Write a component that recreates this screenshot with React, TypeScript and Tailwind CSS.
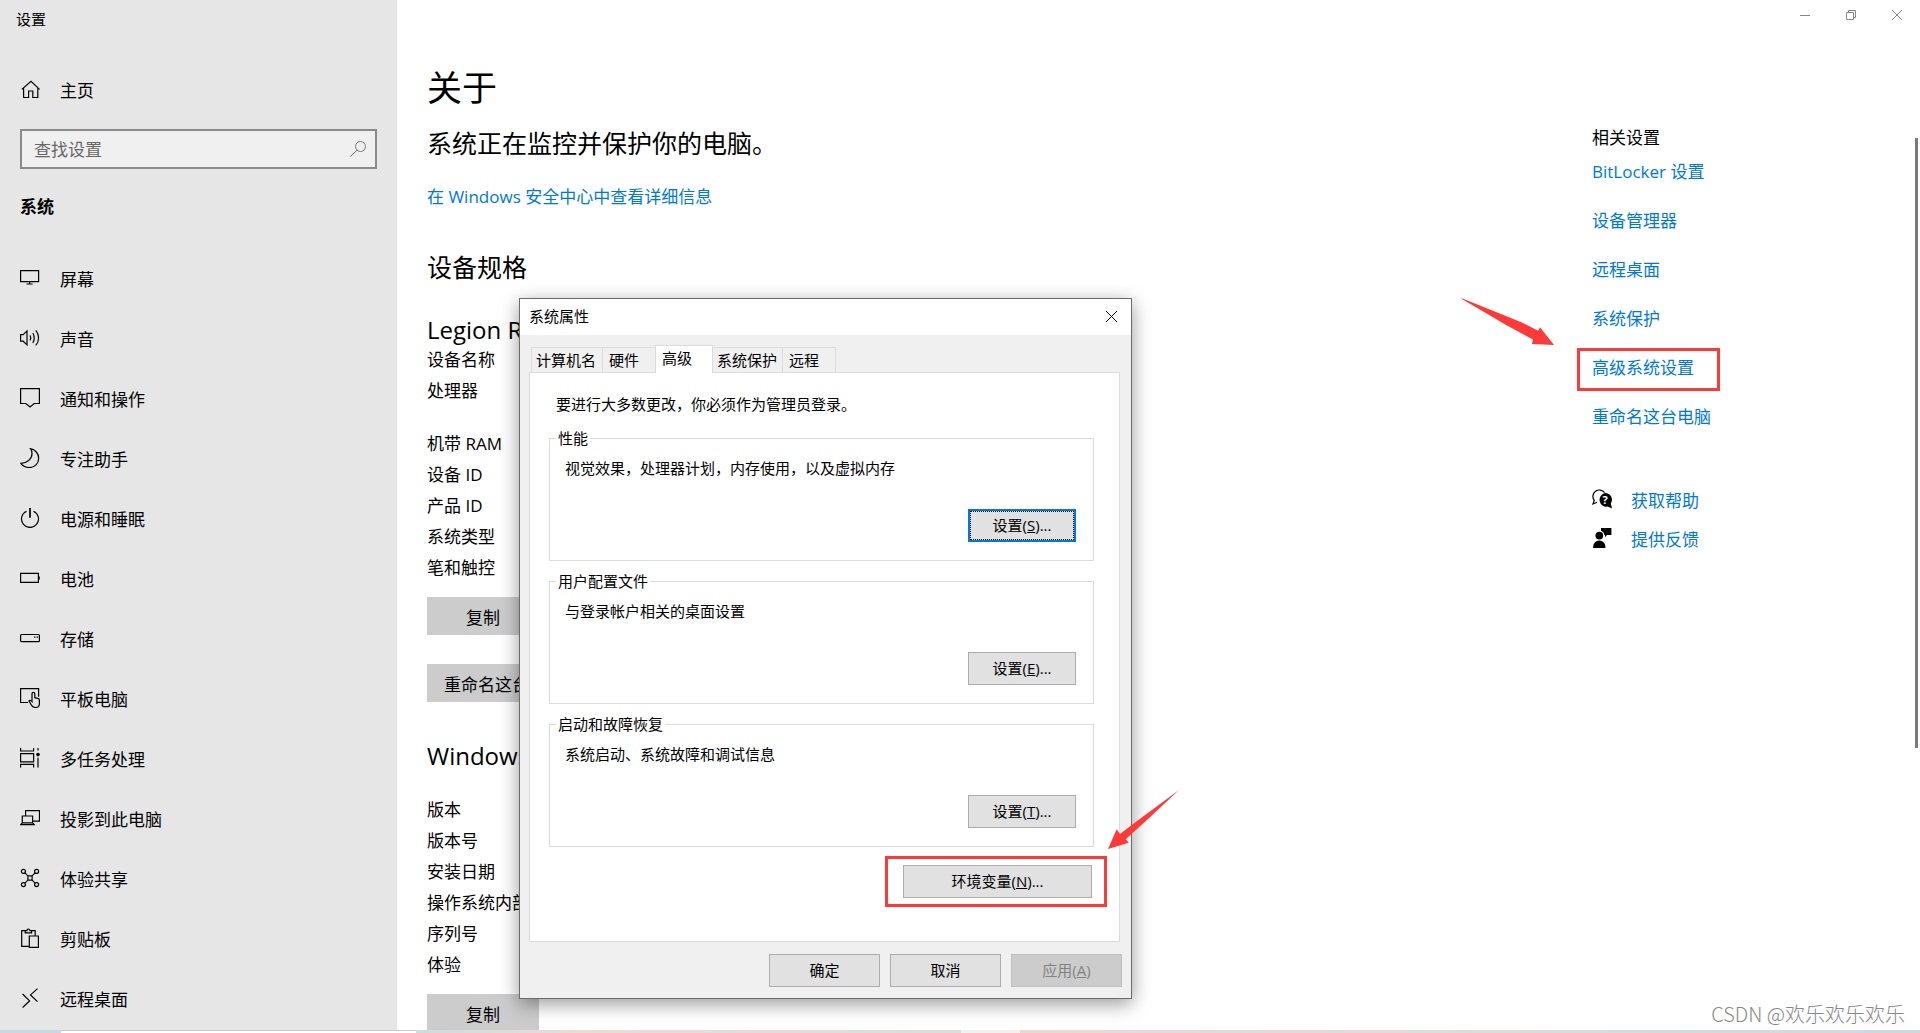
import { useState, type ReactNode } from "react";

const navItems = [
  { label: "屏幕", icon: "display" },
  { label: "声音", icon: "sound" },
  { label: "通知和操作", icon: "notification" },
  { label: "专注助手", icon: "moon" },
  { label: "电源和睡眠", icon: "power" },
  { label: "电池", icon: "battery" },
  { label: "存储", icon: "storage" },
  { label: "平板电脑", icon: "tablet" },
  { label: "多任务处理", icon: "multitask" },
  { label: "投影到此电脑", icon: "project" },
  { label: "体验共享", icon: "share" },
  { label: "剪贴板", icon: "clipboard" },
  { label: "远程桌面", icon: "remote" },
];

const relatedLinks = [
  "BitLocker 设置",
  "设备管理器",
  "远程桌面",
  "系统保护",
  "高级系统设置",
  "重命名这台电脑",
];

const tabs = [
  { label: "计算机名", className: "w-[72px] pl-1" },
  { label: "硬件", className: "w-[54px] pl-1.5" },
  { label: "高级", className: "w-[58px] pl-1.5" },
  { label: "系统保护", className: "w-[71px] pl-1" },
  { label: "远程", className: "w-[54px] pl-1.5" },
];

const groups = [
  {
    title: "性能",
    text: "视觉效果，处理器计划，内存使用，以及虚拟内存",
    hotkey: "S",
    focused: true,
  },
  { title: "用户配置文件", text: "与登录帐户相关的桌面设置", hotkey: "E" },
  { title: "启动和故障恢复", text: "系统启动、系统故障和调试信息", hotkey: "T" },
];

const icons: Record<string, ReactNode> = {
  home: <path d="M1.8 9.4 11 1.3l8.6 8.1M3.6 8v9.5h5V11h4.2v6.5h5V8" />,
  display: <path d="M.6 2.6h18v11H.6zM9.6 13.6V16M6.5 16h6.2" />,
  sound: (
    <path d="M.6 6.6h2.6L7 2.9v14l-3.8-3.7H.6zM10 7.4c.9 1.4.9 3.6 0 5M12.8 5c1.9 2.7 1.9 7.1 0 9.8M15.8 2.4c3.7 4.4 3.7 10.6 0 15" />
  ),
  notification: <path d="M.6.6h18.8v14.9h-5.2L10 19l-4.2-3.5H.6z" />,
  moon: (
    <path d="M10.5.7c4.7.8 8.2 4.8 8.2 9.6a9.2 9.2 0 0 1-9.2 9.2c-3.8 0-6.7-1.6-8.6-4.2 6.3 0 11.1-4.5 11.1-9.6 0-2-.4-3.6-1.5-5z" />
  ),
  power: (
    <>
      <path d="M6.5 3.2a8.5 8.5 0 1 0 7 0" />
      <path d="M10 0v9.8" strokeWidth="1.7" />
    </>
  ),
  battery: <path d="M.6 5.3h17.8v9H.6zM19.2 8.5v3" />,
  storage: (
    <>
      <rect x=".6" y="6.5" width="18.8" height="7.2" rx="1" />
      <path d="M14 9.2h1.4M16.6 9.2H18" />
    </>
  ),
  tablet: (
    <path d="M8 14.5H.6V.6h18v8.2M12 13.6V5.8a1.4 1.4 0 0 1 2.8 0v3.9l3 .6c1 .2 1.6.9 1.6 1.9v3.2c0 2.4-1.6 4.1-4 4.1-2.2 0-3.4-1-4.2-2.8L9 13c.8-.9 1.8-.7 3 .6z" />
  ),
  multitask: (
    <>
      <path d="M.6 0v3h13V0M.6 5.6h13v8.2H.6zM.6 19.5v-3.2h13v3.2M18 0v2.5M18 9.8v9.7" />
      <circle cx="18" cy="6.6" r="1.8" fill="currentColor" stroke="none" />
    </>
  ),
  project: (
    <path d="M5.6 7.6v-5h13.9v10.6h-6.3M2.3 8h10.3v6.8H2.3zM2.3 14.8.6 16.7h13.6l-1.6-1.9" />
  ),
  share: (
    <>
      <circle cx="3.4" cy="3.4" r="2" />
      <circle cx="16.6" cy="3.4" r="2" />
      <circle cx="3.4" cy="16.6" r="2" />
      <circle cx="16.6" cy="16.6" r="2" />
      <path d="m4.9 4.9 3 3M15.1 4.9l-3 3M4.9 15.1l3-3M15.1 15.1l-3-3M7.9 7.9h4.2v4.2H7.9z" />
    </>
  ),
  clipboard: (
    <path d="M8.6 18.4H1.7V2.6h3.5M11.6 2.6h3.6v5M5.2 4.8V2.6h1.7a1.5 1.5 0 0 1 3 0h1.7v2.2zM9.3 8h9.1v11.4H9.3z" />
  ),
  remote: <path d="m2.6 6 7 6.9-7 6.6M17.5.6l-7 6.3 7 6.7" />,
};

const Icon = ({ name }: { name: string }) => (
  <svg
    viewBox="0 0 20 20"
    className="size-5 shrink-0"
    fill="none"
    stroke="currentColor"
    strokeWidth="1.2"
    aria-hidden="true"
  >
    {icons[name]}
  </svg>
);

const Sidebar = () => (
  <aside className="w-[397px] shrink-0 overflow-hidden bg-[#e6e6e6] px-5">
    <p className="-ml-1 pt-[7px] text-[15px] leading-6">设置</p>
    <a href="#home" className="mt-[47px] flex h-6 items-center gap-5">
      <Icon name="home" />
      <span className="pt-0.5 leading-6">主页</span>
    </a>
    <div className="mt-[27px] flex h-10 items-center border-2 border-[#8a8a8a] bg-[#f0f0f0] pr-2 pl-3">
      <input
        type="text"
        aria-label="查找设置"
        placeholder="查找设置"
        className="h-full min-w-0 flex-1 bg-transparent outline-none placeholder:text-[#666]"
      />
      <svg
        viewBox="0 0 18 18"
        className="size-[18px]"
        fill="none"
        stroke="#777"
        aria-hidden="true"
      >
        <circle cx="11.5" cy="6.5" r="5" />
        <path d="m8 10.2-6.7 6.3" />
      </svg>
    </div>
    <h2 className="mt-[26px] leading-6 font-bold">系统</h2>
    <nav className="mt-[29px]">
      {navItems.map(({ label, icon }) => (
        <a
          key={label}
          href={`#${icon}`}
          className="flex h-[60px] items-center gap-5"
        >
          <Icon name={icon} />
          <span className="pt-1 leading-6">{label}</span>
        </a>
      ))}
    </nav>
  </aside>
);

const WindowControls = () => (
  <div className="flex justify-end text-[#888]">
    <button
      type="button"
      aria-label="最小化"
      className="grid h-[30px] w-[46px] place-items-center"
    >
      <svg viewBox="0 0 10 10" className="size-2.5" fill="none" stroke="currentColor">
        <path d="M0 5.5h10" />
      </svg>
    </button>
    <button
      type="button"
      aria-label="还原"
      className="grid h-[30px] w-[46px] place-items-center"
    >
      <svg viewBox="0 0 10 10" className="size-2.5" fill="none" stroke="currentColor">
        <path d="M.5 2.5h7v7h-7zM2.5 2.5v-2h7v7h-2" />
      </svg>
    </button>
    <button
      type="button"
      aria-label="关闭"
      className="grid h-[30px] w-[46px] place-items-center"
    >
      <svg viewBox="0 0 10 10" className="size-2.5" fill="none" stroke="currentColor">
        <path d="m0 0 10 10M10 0 0 10" />
      </svg>
    </button>
  </div>
);

const About = () => (
  <section className="pt-[35px]">
    <h1 className="text-[35px] leading-[46px]">关于</h1>
    <p className="mt-4 text-[25px] leading-8">系统正在监控并保护你的电脑。</p>
    <a href="#security" className="mt-[26px] block leading-6 text-[#0078d7]">
      在 Windows 安全中心中查看详细信息
    </a>

    <h2 className="mt-[42px] text-[25px] leading-8">设备规格</h2>
    <h3 className="mt-[33px] text-[24px] leading-7">Legion R</h3>
    <ul className="leading-[31px]">
      <li>设备名称</li>
      <li className="mb-[22px]">处理器</li>
      <li>机带 RAM</li>
      <li>设备 ID</li>
      <li>产品 ID</li>
      <li>系统类型</li>
      <li>笔和触控</li>
    </ul>
    <button type="button" className="mt-3.5 block h-[38px] w-28 bg-[#ccc] pt-[3px]">
      复制
    </button>
    <button
      type="button"
      className="mt-[29px] block h-[38px] bg-[#ccc] px-[17px] pt-[3px]"
    >
      重命名这台电脑
    </button>

    <h2 className="mt-10 text-[24px] leading-7">Windows 规格</h2>
    <ul className="mt-6 leading-[31px]">
      <li>版本</li>
      <li>版本号</li>
      <li>安装日期</li>
      <li>操作系统内部版本</li>
      <li>序列号</li>
      <li>体验</li>
    </ul>
    <button type="button" className="mt-3.5 block h-[38px] w-28 bg-[#ccc] pt-[3px]">
      复制
    </button>
  </section>
);

const Related = () => (
  <aside className="w-[328px] shrink-0 pt-24 text-[#0078d7]">
    <h2 className="leading-6 text-black">相关设置</h2>
    <ul className="mt-2.5 space-y-[25px]">
      {relatedLinks.map((label) => (
        <li key={label} className="relative leading-6">
          <a href="#related">{label}</a>
          {label === "高级系统设置" && (
            <span className="absolute -top-2 -left-[15px] h-[43px] w-[143px] border-[3px] border-[#fc3a3a]" />
          )}
        </li>
      ))}
    </ul>
    <a href="#help" className="mt-[60px] flex gap-[19px] leading-6">
      <svg
        viewBox="0 0 20 20"
        className="size-5 shrink-0 text-black"
        aria-hidden="true"
      >
        <path
          d="M5 13.2 1 15l1.2-3.6A6.2 6.2 0 1 1 12.6 3.6"
          fill="none"
          stroke="currentColor"
          strokeWidth="1.2"
        />
        <path
          d="M13.2 4a6.7 6.7 0 0 1 5.6 10.4l1.2 5-4.3-1.8A6.7 6.7 0 1 1 13.2 4z"
          fill="currentColor"
        />
        <text
          x="13.2"
          y="14.8"
          fontSize="11"
          fontWeight="bold"
          textAnchor="middle"
          fill="#fff"
        >
          ?
        </text>
      </svg>
      获取帮助
    </a>
    <a href="#feedback" className="mt-[15px] flex gap-[19px] leading-6">
      <svg
        viewBox="0 0 20 20"
        className="size-5 shrink-0 text-black"
        fill="currentColor"
        aria-hidden="true"
      >
        <circle cx="7.3" cy="7.6" r="3.9" />
        <path d="M1.2 20v-1.5a6.1 6.1 0 0 1 12.2 0V20zM9 0h10.4v7H15l-2 2.2V7h-.6A5.2 5.2 0 0 0 9 2.7z" />
      </svg>
      提供反馈
    </a>
  </aside>
);

const DialogButton = ({
  className,
  disabled,
  focused,
  children,
}: {
  className: string;
  disabled?: boolean;
  focused?: boolean;
  children: ReactNode;
}) => (
  <button
    type="button"
    disabled={disabled}
    className={`h-[33px] bg-[#e1e1e1] pb-0.5 disabled:border-[#bfbfbf] disabled:bg-[#ccc] disabled:text-[#838383] ${
      focused
        ? "border-2 border-[#0078d7] outline-1 -outline-offset-3 outline-black outline-dotted"
        : "border border-[#adadad]"
    } ${className}`}
  >
    {children}
  </button>
);

const SystemProperties = () => {
  const [activeTab, setActiveTab] = useState("高级");

  return (
    <div
      role="dialog"
      aria-label="系统属性"
      className="absolute top-[298px] left-[519px] w-[613px] border border-[#6b6b6b] bg-[#f0f0f0] pb-[11px] text-[15px] leading-5 shadow-[0_5px_18px_rgba(0,0,0,0.4)]"
    >
      <div className="flex h-9 items-center justify-between bg-white pr-3.5 pb-0.5 pl-[9px]">
        <span>系统属性</span>
        <button type="button" aria-label="关闭">
          <svg
            viewBox="0 0 11 11"
            className="size-[11px]"
            fill="none"
            stroke="#000"
          >
            <path d="m0 0 11 11M11 0 0 11" />
          </svg>
        </button>
      </div>

      <div role="tablist" className="flex h-[37px] items-end pl-[11px]">
        {tabs.map(({ label, className }) => (
          <button
            key={label}
            type="button"
            role="tab"
            aria-selected={label === activeTab}
            onClick={() => setActiveTab(label)}
            className={`border border-b-0 border-[#dcdcdc] text-left not-first:-ml-px ${className} ${
              label === activeTab
                ? "relative z-10 -mb-px h-7 bg-white pb-1"
                : "h-[25px]"
            }`}
          >
            {label}
          </button>
        ))}
      </div>

      <div className="mr-[11px] ml-[9px] h-[570px] border border-[#dcdcdc] bg-white pr-[25px] pl-[19px]">
        <p className="pt-[21px] pl-[7px]">
          要进行大多数更改，你必须作为管理员登录。
        </p>
        <div className="mt-3.5 space-y-2.5">
          {groups.map(({ title, text, hotkey, focused }) => (
            <fieldset
              key={title}
              className="h-[133px] border border-[#dcdcdc] pr-[17px] pl-[15px]"
            >
              <legend className="-ml-[9px] px-[2px] pb-px">{title}</legend>
              <p className="mt-[9px]">{text}</p>
              <DialogButton
                className="mt-[31px] ml-auto block w-[108px]"
                focused={focused}
              >
                设置(<u>{hotkey}</u>)...
              </DialogButton>
            </fieldset>
          ))}
        </div>
        <div className="mt-[9px] -mr-[13px] ml-auto w-[222px] border-[3px] border-[#fc3a3a] py-1.5 pr-3 pl-[15px]">
          <DialogButton className="block w-full">
            环境变量(<u>N</u>)...
          </DialogButton>
        </div>
      </div>

      <div className="mt-3 flex justify-end gap-2.5 pr-[9px]">
        <DialogButton className="w-[111px]">确定</DialogButton>
        <DialogButton className="w-[111px]">取消</DialogButton>
        <DialogButton className="w-[111px]" disabled>
          应用(<u>A</u>)
        </DialogButton>
      </div>
    </div>
  );
};

const App = () => (
  <div className="relative flex h-screen flex-col overflow-hidden bg-white font-['Open_Sans','Noto_Sans_CJK_SC',sans-serif] text-[17px] text-black">
    <div className="flex min-h-0 flex-1">
      <Sidebar />
      <main className="min-w-0 flex-1 overflow-hidden">
        <WindowControls />
        <div className="flex justify-between pl-[30px]">
          <About />
          <Related />
        </div>
      </main>
    </div>
    <div className="flex h-[3px] shrink-0">
      <div className="w-[61px] bg-[#c9dadf]" />
      <div className="w-[355px] border-t border-[#c8c8c8]" />
      <div className="flex-1 bg-linear-to-r from-[#cddcdf] via-[#ecdcd3] via-30% to-[#dfdcdb]" />
      <div className="w-[59px] bg-[#f7efeb]" />
      <div className="w-[900px] bg-linear-to-r from-[#ead9d2] via-[#e0dbda] via-50% to-[#cbdade]" />
    </div>

    <div className="absolute top-[138px] right-[2px] h-[610px] w-[3px] bg-[#7a7a7a]" />
    <SystemProperties />

    <svg
      viewBox="0 0 93 47"
      className="absolute top-[298px] left-[1461px] h-[47px] w-[93px]"
      fill="#fc3a3a"
      aria-hidden="true"
    >
      <path d="M0 .5h1.5L61 24.5l16 8.3 2-3.5L93 47l-22-1 1-4.5-26-14z" />
    </svg>
    <svg
      viewBox="0 0 71 59"
      className="absolute top-[790px] left-[1108px] h-[59px] w-[71px]"
      fill="#fc3a3a"
      aria-hidden="true"
    >
      <path d="M71 0 29 31 12 44 8.700 39.300 0 59l20.700-6.300-3-3.400L40 29z" />
    </svg>

    <p className="absolute right-[15px] bottom-[5px] font-['Noto_Sans_CJK_SC',sans-serif] text-[20px] leading-7 font-light text-[#888]">
      CSDN @欢乐欢乐欢乐
    </p>
  </div>
);

export default App;
